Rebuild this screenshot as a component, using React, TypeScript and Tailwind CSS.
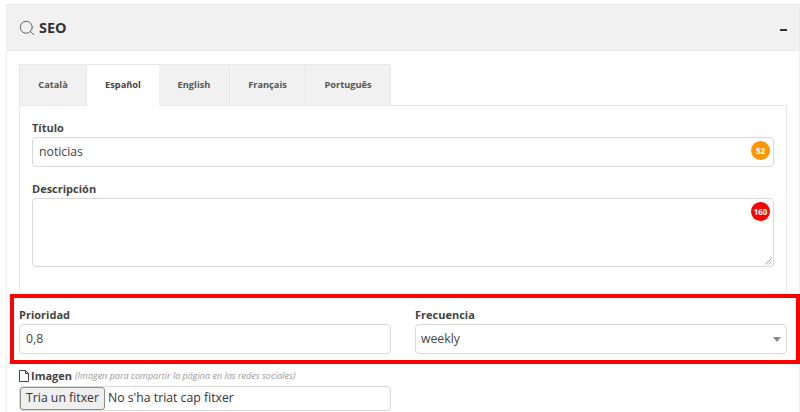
import { Search } from 'lucide-react';

const tabs = [
  { label: 'Català', width: 'w-[68px]' },
  { label: 'Español', width: 'w-[72px]', active: true },
  { label: 'English', width: 'w-[71px]' },
  { label: 'Français', width: 'w-[76px]' },
  { label: 'Português', width: 'w-[85px]' },
];

const labelClass = 'block text-[11px] leading-[14px] font-bold text-[#444]';
const fieldClass = 'rounded border border-[#d9d9d9] bg-white text-[12.25px] text-[#444]';

export default function App() {
  return (
    <div className="h-[412px] w-[800px] overflow-hidden bg-white pt-1 pl-1.5 font-['Open_Sans',sans-serif]">
      <div className="relative h-[420px] w-[794px] border-x border-[#eee]">
        {/* Header */}
        <div className="flex h-[47px] items-center justify-between border-y border-[#e9e9e9] bg-[#f1f1f1] pr-[12px] pl-3">
          <div className="flex items-center gap-[3px]">
            <Search className="-ml-px h-[18px] w-[18px] text-[#555]" strokeWidth={1.2} />
            <span className="text-[14.5px] font-bold text-[#333]">SEO</span>
          </div>
          <span className="mt-[5px] h-[2px] w-[7px] bg-[#333]" />
        </div>

        <div className="px-3 pt-[13px]">
          {/* Tabs */}
          <div className="flex h-[41px]">
            {tabs.map((tab, i) => (
              <div
                key={tab.label}
                className={
                  tab.active
                    ? `${tab.width} relative z-10 flex h-[42px] items-center justify-center border-t border-[#e8e8e8] bg-white pb-px text-[9.25px] font-bold text-[#444]`
                    : `${tab.width} flex items-center justify-center border-t border-r border-[#e8e8e8] bg-[#f1f1f1] text-[9.25px] font-bold text-[#555] ${i === 0 ? 'border-l' : ''}`
                }
              >
                {tab.label}
              </div>
            ))}
          </div>

          <div className="h-[187px] w-[768px] border-x border-t border-[#e8e8e8] px-3 pt-[15px]">
            <label className={labelClass}>Título</label>
            <div className={`${fieldClass} relative mt-[2px] flex h-[30px] w-[742px] items-center px-1.5`}>
              noticias
              <span className="absolute top-[3px] right-[3px] flex h-[19px] w-[19px] items-center justify-center rounded-full bg-[#ff9800] text-[8px] font-bold text-white">
                52
              </span>
            </div>
            <label className={`${labelClass} mt-[15px]`}>Descripción</label>
            <div className={`${fieldClass} relative mt-[2px] h-[69px] w-[742px]`}>
              <span className="absolute top-[3px] right-[3px] flex h-[19px] w-[19px] items-center justify-center rounded-full bg-[#ff0000] text-[8px] font-bold text-white">
                160
              </span>
              <svg className="absolute right-px bottom-px h-[7px] w-[7px]" viewBox="0 0 7 7" fill="none" stroke="#888" strokeWidth="0.8">
                <path d="M0.5 6.5 6.5 0.5M3.5 6.5 6.5 3.5" />
              </svg>
            </div>
          </div>

          {/* Prioridad / Frecuencia */}
          <div className="mt-[16px] flex w-[768px] gap-6">
            <div className="w-[372px]">
              <label className={labelClass}>Prioridad</label>
              <div className={`${fieldClass} mt-[2px] flex h-[30px] items-center px-1.5`}>0,8</div>
            </div>
            <div className="w-[372px]">
              <label className={labelClass}>Frecuencia</label>
              <div className={`${fieldClass} mt-[2px] flex h-[30px] items-center justify-between pr-[5px] pl-[5px]`}>
                weekly
                <span className="h-0 w-0 border-x-4 border-t-[5px] border-x-transparent border-t-[#888]" />
              </div>
            </div>
          </div>

          {/* Imagen */}
          <div className="mt-[13px] w-[372px]">
            <div className="flex h-[18px] items-center">
              <svg className="h-[12px] w-[10px]" viewBox="0 0 10 12" fill="none" stroke="#444" strokeWidth="1">
                <path d="M0.5 0.5H6.5L9.5 3.5V11.5H0.5ZM6.5 0.5V3.5H9.5" />
              </svg>
              <span className="ml-[2px] text-[11px] font-bold text-[#444]">Imagen</span>
              <span className="ml-[3px] text-[9px] text-[#999] italic">(Imagen para compartir la página en las redes sociales)</span>
            </div>
            <div className={`${fieldClass} mt-[1px] flex h-[25px] items-center`}>
              <span className="flex h-full w-[85px] items-center justify-center rounded-[3px] border border-[#8f8f8f] bg-[#efefef] text-[#333]">
                Tria un fitxer
              </span>
              <span className="ml-[3px] text-[#333]">No s'ha triat cap fitxer</span>
            </div>
          </div>
        </div>

        {/* Highlight drawn over the form */}
        <div className="absolute top-[290px] left-[3px] h-[70px] w-[790px] border-4 border-[#ff0000]" />
      </div>
    </div>
  );
}
